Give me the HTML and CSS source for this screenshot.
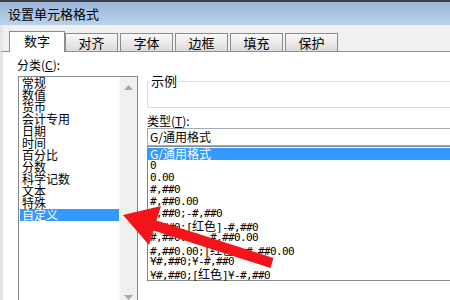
FILE: index.html
```html
<!DOCTYPE html>
<html lang="zh-CN">
<head>
    <meta charset="UTF-8">
    <title>设置单元格格式</title>
    <link rel="stylesheet" href="styles.css">
</head>
<body>
    <div class="window">
        <div class="titlebar">设置单元格格式</div>
        <div class="tabs">
            <div class="tab active">数字</div>
            <div class="tab">对齐</div>
            <div class="tab">字体</div>
            <div class="tab">边框</div>
            <div class="tab">填充</div>
            <div class="tab">保护</div>
        </div>
        <div class="panel">
            <div class="left">
                <div class="label">分类(<u>C</u>):</div>
                <div class="listbox">
                    <ul class="categories">
                        <li>常规</li>
                        <li>数值</li>
                        <li>货币</li>
                        <li>会计专用</li>
                        <li>日期</li>
                        <li>时间</li>
                        <li>百分比</li>
                        <li>分数</li>
                        <li>科学记数</li>
                        <li>文本</li>
                        <li>特殊</li>
                        <li class="selected">自定义</li>
                    </ul>
                    <div class="scrollbar">
                        <svg width="9" height="5" viewBox="0 0 9 5"><polygon points="0,5 4.5,0 9,5" fill="#a8a8a8"/></svg>
                        <svg width="9" height="5" viewBox="0 0 9 5"><polygon points="0,0 4.5,5 9,0" fill="#a8a8a8"/></svg>
                    </div>
                </div>
            </div>
            <div class="right">
                <fieldset class="sample">
                    <legend>示例</legend>
                    <div class="sample-body"></div>
                </fieldset>
                <div class="label type-label">类型(<u>T</u>):</div>
                <div class="input"><span class="cjk">G/通用格式</span></div>
                <ul class="formats">
                    <li class="selected"><span class="cjk">G/通用格式</span></li>
                    <li>0</li>
                    <li>0.00</li>
                    <li>#,##0</li>
                    <li>#,##0.00</li>
                    <li>#,##0;-#,##0</li>
                    <li>#,##0;[<span class="cjk">红色</span>]-#,##0</li>
                    <li>#,##0.00;-#,##0.00</li>
                    <li>#,##0.00;[<span class="cjk">红色</span>]-#,##0.00</li>
                    <li>¥#,##0;¥-#,##0</li>
                    <li>¥#,##0;[<span class="cjk">红色</span>]¥-#,##0</li>
                </ul>
            </div>
        </div>
        <svg class="arrow" width="450" height="300" viewBox="0 0 450 300">
            <polygon points="123,215 161,206 156.5,220.5 273.5,258 270.5,268 153.5,230.5 149,245" fill="#f2141a"/>
        </svg>
    </div>
</body>
</html>
```

FILE: styles.css
```css
body {
    margin: 0;
    width: 450px;
    height: 300px;
    overflow: hidden;
    background: #fff;
    font-family: "Noto Sans CJK SC", sans-serif;
    font-size: 12px;
    color: #000;
}
.window {
    position: relative;
    height: 300px;
}
.titlebar {
    height: 23px;
    border-top: 2px solid #3b3f45;
    background: linear-gradient(#9cb7d8, #b9d1ec);
    padding-left: 8px;
    line-height: 23px;
    font-size: 13px;
}
.tabs {
    height: 26px;
    background: #f0f0f0;
    border-bottom: 1px solid #8e9196;
    display: flex;
    align-items: flex-end;
    padding-left: 9px;
    border-left: 3px solid #e4e4e4;
}
.tab {
    width: 51px;
    height: 17px;
    margin-right: 2px;
    border: 1px solid #8c8c8c;
    border-bottom: none;
    background: linear-gradient(#fafafa, #dadada);
    text-align: center;
    line-height: 18px;
    font-size: 13px;
}
.tab.active {
    height: 20px;
    width: 54px;
    margin-left: -3px;
    margin-right: 0;
    margin-bottom: -1px;
    background: #fff;
    position: relative;
}
.panel {
    display: flex;
    padding-left: 17px;
    border-left: 3px solid #e4e4e4;
    margin-left: 0;
}
.left {
    width: 121px;
    margin-left: -3px;
}
.label {
    margin-top: 6px;
    margin-bottom: 4px;
    line-height: 14px;
}
.left .label {
    margin-left: 0;
}
.listbox {
    display: flex;
    margin-left: 1px;
    height: 226px;
    border: 1px solid #828790;
}
.categories {
    list-style: none;
    margin: 0;
    padding: 0 0 0 1px;
    width: 101px;
}
.categories li,
.formats li {
    height: 12px;
    line-height: 12px;
    padding-left: 2px;
    white-space: nowrap;
}
.categories li:first-child {
    margin-top: 0;
}
li.selected {
    background: #3399ff;
    color: #fff;
}
.scrollbar {
    width: 17px;
    background: #f0f0f0;
    border-left: 1px solid #f8f8f8;
    display: flex;
    flex-direction: column;
    justify-content: space-between;
    align-items: center;
    padding: 8px 0 3px;
}
.right {
    margin-left: 9px;
    width: 320px;
}
.sample {
    margin: 22px 0 0;
    padding: 0;
    border: 1px solid #d5dfe5;
    border-right: none;
    border-radius: 3px 0 0 3px;
}
.sample legend {
    margin-left: 2px;
    padding: 0 1px;
    font-size: 13px;
    line-height: 14px;
}
.sample-body {
    height: 19px;
}
.type-label {
    margin-bottom: 0;
}
.input {
    height: 16px;
    border: 1px solid #a5acb5;
    border-right: none;
    line-height: 16px;
    padding-left: 2px;
}
.formats {
    list-style: none;
    margin: 0;
    padding: 1px 0 0;
    border: 1px solid #828790;
    border-right: none;
    font-family: "DejaVu Sans Mono", "Noto Sans CJK SC", monospace;
    font-size: 11px;
    letter-spacing: -0.62px;
}
.cjk {
    font-family: "Noto Sans CJK SC", sans-serif;
    font-size: 12px;
    letter-spacing: 0;
}
.arrow {
    position: absolute;
    left: 0;
    top: 0;
    pointer-events: none;
}
```
